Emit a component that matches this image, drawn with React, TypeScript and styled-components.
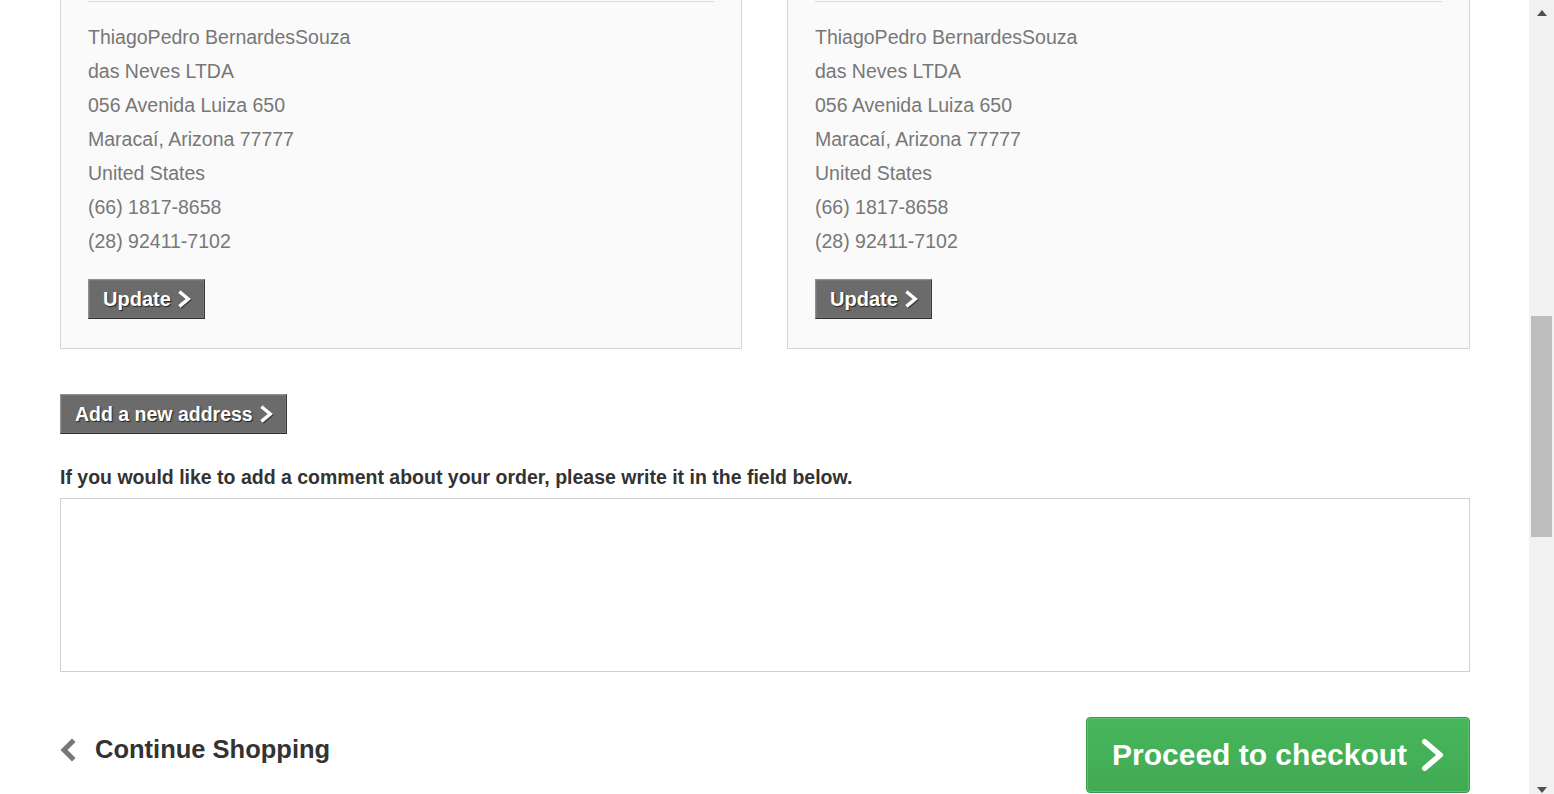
import React from "react";
import styled, { createGlobalStyle } from "styled-components";

const Global = createGlobalStyle`
  html, body { margin: 0; padding: 0; background: #fff; overflow: hidden; }
  body { font-family: "Liberation Sans", Arial, sans-serif; }
  * { box-sizing: border-box; }
`;

const Frame = styled.div`
  display: flex;
  width: 1554px;
  height: 794px;
  overflow: hidden;
`;

const Main = styled.main`
  flex: 1;
  padding: 0 59px 0 60px;
  display: flex;
  flex-direction: column;
`;

const AddressGrid = styled.div`
  display: grid;
  grid-template-columns: 682px 683px;
  column-gap: 45px;
`;

const AddressBox = styled.section`
  background: #fafafa;
  border: 1px solid #d6d6d6;
  border-top: none;
  padding: 1px 27px 29px;
`;

const HeadLine = styled.div`
  height: 1px;
  background: #dcdcdc;
  margin-bottom: 18px;
`;

const AddressList = styled.ul`
  list-style: none;
  margin: 0 0 21px;
  padding: 0;
`;

const AddressLine = styled.li`
  font-size: 19.5px;
  line-height: 34px;
  color: #777;
`;

const GrayButton = styled.button<{ $size?: number }>`
  display: inline-flex;
  align-items: center;
  gap: 8px;
  height: 40px;
  padding: 0 14px 0 14px;
  background: #6b6b6b;
  border: 1px solid;
  border-color: #8f8f8f #3a3a3a #2e2e2e #8f8f8f;
  box-shadow: inset 0 0 0 1px #757575;
  color: #fff;
  font-family: "Liberation Sans", Arial, sans-serif;
  font-weight: bold;
  font-size: ${(p) => p.$size ?? 20}px;
  text-shadow: 1px 1px 1px #222;
  cursor: pointer;
  align-self: flex-start;
`;

const Chevron = styled.svg`
  display: block;
  overflow: visible;
`;

const AddButton = styled(GrayButton)`
  margin-top: 45px;
`;

const CommentLabel = styled.label`
  margin-top: 31px;
  font-size: 19.5px;
  line-height: 24px;
  font-weight: bold;
  color: #333;
`;

const CommentArea = styled.textarea`
  margin-top: 9px;
  height: 174px;
  width: 100%;
  border: 1px solid #d0d0d0;
  resize: none;
  font-family: "Liberation Sans", Arial, sans-serif;
  font-size: 16px;
  outline: none;
`;

const Footer = styled.div`
  margin-top: 45px;
  display: flex;
  justify-content: space-between;
  align-items: flex-start;
`;

const BackLink = styled.a`
  display: flex;
  align-items: center;
  gap: 20px;
  margin-top: 18px;
  font-size: 25.5px;
  font-weight: bold;
  color: #333;
  text-decoration: none;
  cursor: pointer;
`;

const CheckoutButton = styled.button`
  display: flex;
  align-items: center;
  gap: 15px;
  width: 384px;
  height: 76px;
  padding: 0 0 0 25px;
  border-radius: 4px;
  border: 1px solid #379a49;
  box-shadow: inset 0 0 0 1px #5cc46d;
  background: linear-gradient(#47b65b, #41aa54);
  color: #fff;
  font-family: "Liberation Sans", Arial, sans-serif;
  font-size: 30px;
  font-weight: bold;
  cursor: pointer;
`;

const Scrollbar = styled.div`
  width: 25px;
  background: #f1f1f1;
  display: flex;
  flex-direction: column;
  align-items: center;
`;

const ArrowUp = styled.div`
  margin-top: 10px;
  width: 0;
  height: 0;
  border-left: 5px solid transparent;
  border-right: 5px solid transparent;
  border-bottom: 6px solid #505050;
`;

const Thumb = styled.div`
  margin-top: 300px;
  width: 21px;
  height: 221px;
  background: #bdbdbd;
`;

const ArrowDown = styled.div`
  margin-top: auto;
  margin-bottom: 1px;
  width: 0;
  height: 0;
  border-left: 5px solid transparent;
  border-right: 5px solid transparent;
  border-top: 6px solid #505050;
`;

const lines = [
  "ThiagoPedro BernardesSouza",
  "das Neves LTDA",
  "056 Avenida Luiza 650",
  "Maracaí, Arizona 77777",
  "United States",
  "(66) 1817-8658",
  "(28) 92411-7102",
];

const RightChevron = ({ w, h, sw, shadow }: { w: number; h: number; sw: number; shadow?: boolean }) => (
  <Chevron width={w} height={h} viewBox={`0 0 ${w} ${h}`}>
    {shadow && (
      <polyline
        points={`${sw / 2 + 1},${sw / 2 + 1} ${w - sw / 2 + 1},${h / 2 + 1} ${sw / 2 + 1},${h - sw / 2 + 1}`}
        fill="none"
        stroke="#222"
        strokeWidth={sw}
        strokeLinecap="square"
        opacity={0.7}
      />
    )}
    <polyline
      points={`${sw / 2},${sw / 2} ${w - sw / 2},${h / 2} ${sw / 2},${h - sw / 2}`}
      fill="none"
      stroke="#fff"
      strokeWidth={sw}
      strokeLinecap={shadow ? "square" : "round"}
      strokeLinejoin={shadow ? "miter" : "round"}
    />
  </Chevron>
);

const Address = () => (
  <AddressBox>
    <HeadLine />
    <AddressList>
      {lines.map((l) => (
        <AddressLine key={l}>{l}</AddressLine>
      ))}
    </AddressList>
    <GrayButton>
      Update
      <RightChevron w={11} h={16} sw={3.5} shadow />
    </GrayButton>
  </AddressBox>
);

export default function App() {
  return (
    <>
      <Global />
      <Frame>
        <Main>
          <AddressGrid>
            <Address />
            <Address />
          </AddressGrid>
          <AddButton $size={19.5}>
            Add a new address
            <RightChevron w={11} h={16} sw={3.5} shadow />
          </AddButton>
          <CommentLabel htmlFor="comment">
            If you would like to add a comment about your order, please write it in the field below.
          </CommentLabel>
          <CommentArea id="comment" />
          <Footer>
            <BackLink>
              <Chevron width={15} height={22} viewBox="0 0 15 22">
                <polyline points="12,3 4,11 12,19" fill="none" stroke="#777" strokeWidth={5} strokeLinecap="square" />
              </Chevron>
              Continue Shopping
            </BackLink>
            <CheckoutButton>
              Proceed to checkout
              <RightChevron w={21} h={32} sw={5.5} />
            </CheckoutButton>
          </Footer>
        </Main>
        <Scrollbar>
          <ArrowUp />
          <Thumb />
          <ArrowDown />
        </Scrollbar>
      </Frame>
    </>
  );
}
